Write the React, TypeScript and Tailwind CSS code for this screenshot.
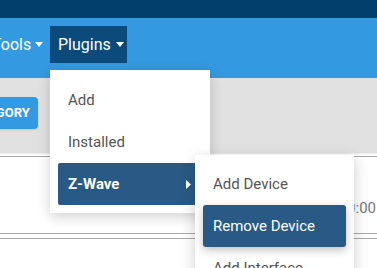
import { useState } from "react";

function Caret({ className = "" }: { className?: string }) {
  return (
    <svg width="8" height="5" viewBox="0 0 8 5" className={className}>
      <path d="M0 0h8L4 5z" fill="currentColor" />
    </svg>
  );
}

export default function App() {
  const [open] = useState(true);
  return (
    <div
      className="relative w-[377px] h-[268px] overflow-hidden bg-white"
      style={{ fontFamily: "Roboto, 'Liberation Sans', sans-serif" }}
    >
      {/* top strip */}
      <div className="h-[18px] bg-[#023f6b]" />

      {/* navbar */}
      <div className="h-[60px] bg-[#3399e0] flex items-start pt-[8px] text-white text-[16px]">
        <div className="flex items-center h-[37px] w-[50px] shrink-0 overflow-visible">
          <span className="-ml-[8px]">Tools</span>
          <Caret className="ml-[4px]" />
        </div>
        <div className="flex items-center h-[37px] w-[77px] bg-[#0b4a7b] pl-[8px]">
          <span>Plugins</span>
          <Caret className="ml-[5px]" />
        </div>
      </div>

      {/* gray toolbar */}
      <div className="h-[75px] bg-[#e1e1e1] pt-[19px] overflow-hidden">
        <div className="-ml-[44px] inline-flex items-center h-[32px] px-[8px] rounded-[4px] bg-[#3399e0] text-white text-[13px] font-bold shadow-sm">
          CATEGORY
        </div>
      </div>

      {/* content */}
      <div className="border-t border-[#ebebeb] pt-[2px]">
        <div className="border-t border-[#a9a9a9]" />
        <div className="h-[76px] flex justify-end items-center pt-[26px] text-[15px] text-[#777]">
          <span className="pr-[1px]">10:00</span>
        </div>
        <div className="border-t border-[#a9a9a9]" />
        <div className="h-[4px]" />
        <div className="border-t border-[#a9a9a9]" />
      </div>

      {open && (
        <>
          {/* plugins dropdown */}
          <div className="absolute left-[50px] top-[70px] w-[160px] bg-white pt-[9px] pb-[8px] shadow-[0_4px_12px_rgba(0,0,0,0.18)] text-[15px] text-[#555]">
            <div className="mx-[8px] h-[42px] flex items-center px-[10px]">Add</div>
            <div className="mx-[8px] h-[42px] flex items-center px-[10px]">Installed</div>
            <div className="mx-[8px] h-[42px] flex items-center justify-between px-[10px] bg-[#285a85] text-white font-bold rounded-[2px]">
              <span>Z-Wave</span>
              <svg width="5" height="9" viewBox="0 0 5 9" className="mr-[1px]">
                <path d="M0 0l5 4.5L0 9z" fill="currentColor" />
              </svg>
            </div>
          </div>

          {/* z-wave submenu */}
          <div className="absolute left-[195px] top-[155px] w-[159px] h-[130px] bg-white pt-[8px] shadow-[0_4px_14px_rgba(0,0,0,0.2)] text-[15px] text-[#555]">
            <div className="mx-[8px] h-[42px] flex items-center px-[10px]">Add Device</div>
            <div className="mx-[8px] h-[42px] flex items-center px-[10px] bg-[#285a85] text-white rounded-[3px] shadow-[0_3px_8px_rgba(0,0,0,0.25)]">
              Remove Device
            </div>
            <div className="mx-[8px] h-[42px] flex items-center px-[10px]">Add Interface</div>
          </div>
        </>
      )}
    </div>
  );
}
